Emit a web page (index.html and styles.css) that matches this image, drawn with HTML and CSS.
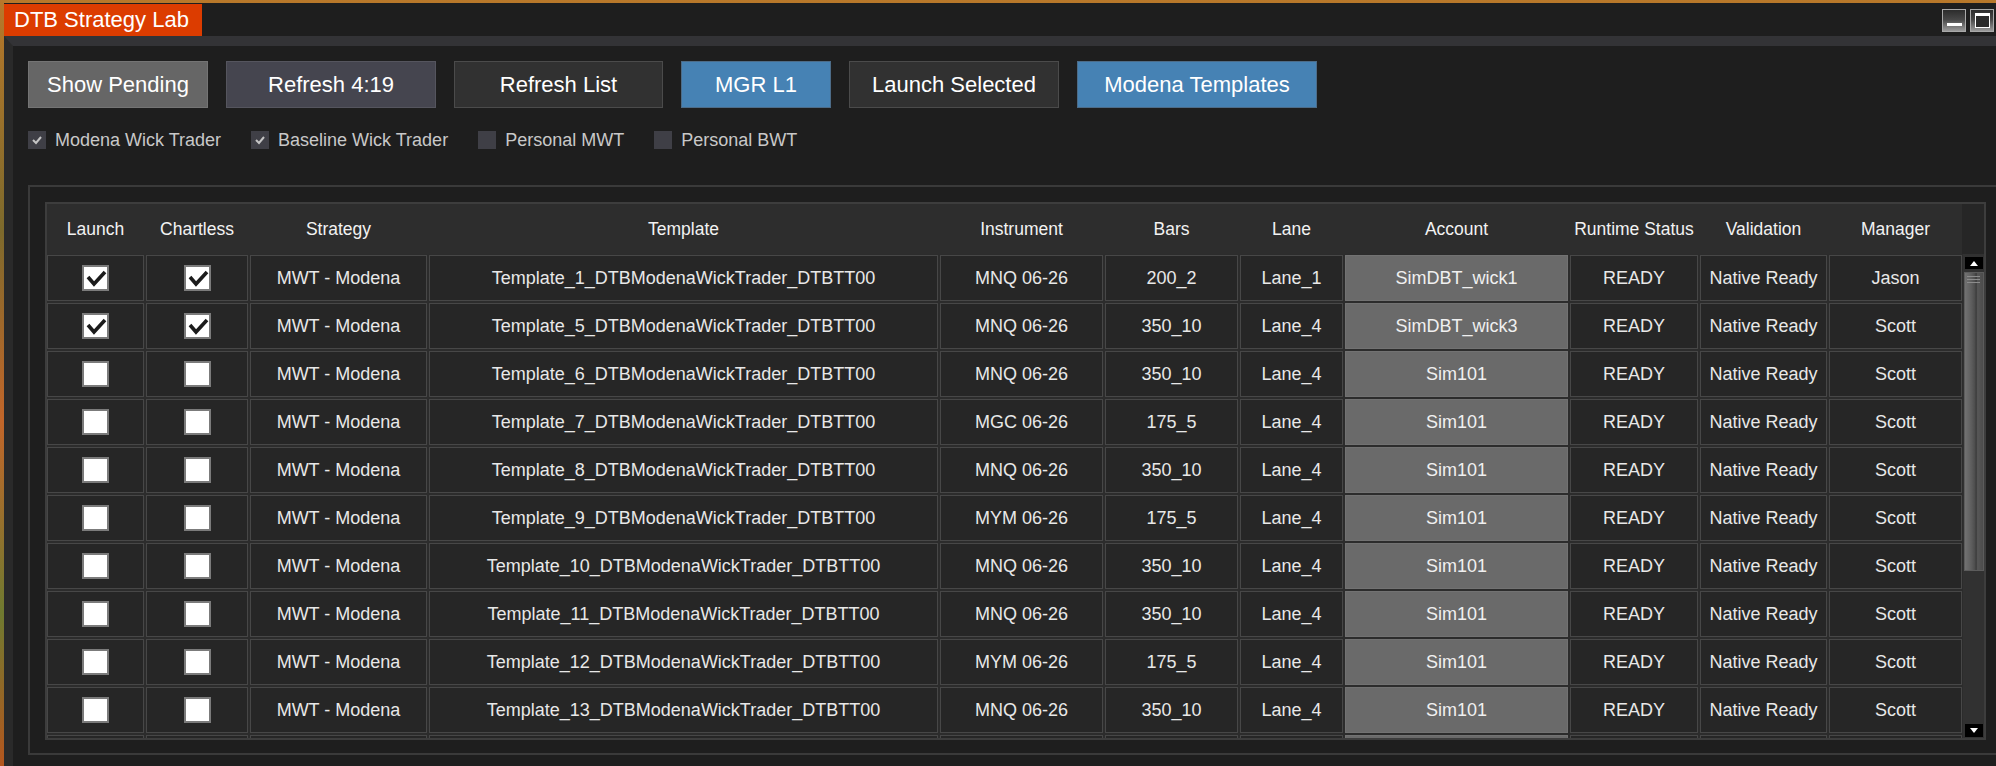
FILE: index.html
```html
<!DOCTYPE html>
<html>
<head>
    <title>DTB Strategy Lab</title>
    <link rel="stylesheet" href="styles.css">
</head>
<body>
    <div class="window">
        <div class="titlebar">
            <div class="title-tab">DTB Strategy Lab</div>
            <div class="win-controls">
                <span class="win-btn win-min"><span class="min-bar"></span></span>
                <span class="win-btn win-max"><span class="max-box"></span></span>
            </div>
        </div>

        <div class="frame">
            <div class="toolbar">
                <div class="btn btn-gray w-pending">Show Pending</div>
                <div class="btn btn-slate w-refresh">Refresh 4:19</div>
                <div class="btn btn-dark w-list">Refresh List</div>
                <div class="btn btn-blue w-mgr">MGR L1</div>
                <div class="btn btn-dark w-launch">Launch Selected</div>
                <div class="btn btn-blue w-templates">Modena Templates</div>
            </div>

            <div class="filters">
                <label class="filter">
                    <span class="fbox"><svg width="12" height="12" viewBox="0 0 12 12"><polyline points="2,6 5,9 10,3" fill="none" stroke="#c4c4c4" stroke-width="2"/></svg></span>
                    Modena Wick Trader
                </label>
                <label class="filter">
                    <span class="fbox"><svg width="12" height="12" viewBox="0 0 12 12"><polyline points="2,6 5,9 10,3" fill="none" stroke="#c4c4c4" stroke-width="2"/></svg></span>
                    Baseline Wick Trader
                </label>
                <label class="filter">
                    <span class="fbox"></span>
                    Personal MWT
                </label>
                <label class="filter">
                    <span class="fbox"></span>
                    Personal BWT
                </label>
            </div>

            <div class="panel">
                <div class="table">
                    <div class="thead">
                        <div class="cols">
                            <div class="th">Launch</div>
                            <div class="th">Chartless</div>
                            <div class="th">Strategy</div>
                            <div class="th">Template</div>
                            <div class="th">Instrument</div>
                            <div class="th">Bars</div>
                            <div class="th">Lane</div>
                            <div class="th">Account</div>
                            <div class="th">Runtime Status</div>
                            <div class="th">Validation</div>
                            <div class="th">Manager</div>
                        </div>
                        <div class="head-gap"></div>
                    </div>
                    <div class="tbody">
                        <div class="rows" id="rows"></div>
                        <div class="scrollbar">
                            <div class="sb-btn sb-up"><svg width="8" height="5" viewBox="0 0 8 5"><polygon points="0,5 8,5 4,0" fill="#fff"/></svg></div>
                            <div class="sb-thumb"><div class="sb-grip"></div></div>
                            <div class="sb-track"></div>
                            <div class="sb-btn sb-down"><svg width="8" height="5" viewBox="0 0 8 5"><polygon points="0,0 8,0 4,5" fill="#fff"/></svg></div>
                        </div>
                    </div>
                </div>
            </div>
        </div>
    </div>

    <script>
        // launch, chartless, template no, instrument, bars, lane, account, manager
        const data = [
            [1, 1, 1, 'MNQ 06-26', '200_2', 'Lane_1', 'SimDBT_wick1', 'Jason'],
            [1, 1, 5, 'MNQ 06-26', '350_10', 'Lane_4', 'SimDBT_wick3', 'Scott'],
            [0, 0, 6, 'MNQ 06-26', '350_10', 'Lane_4', 'Sim101', 'Scott'],
            [0, 0, 7, 'MGC 06-26', '175_5', 'Lane_4', 'Sim101', 'Scott'],
            [0, 0, 8, 'MNQ 06-26', '350_10', 'Lane_4', 'Sim101', 'Scott'],
            [0, 0, 9, 'MYM 06-26', '175_5', 'Lane_4', 'Sim101', 'Scott'],
            [0, 0, 10, 'MNQ 06-26', '350_10', 'Lane_4', 'Sim101', 'Scott'],
            [0, 0, 11, 'MNQ 06-26', '350_10', 'Lane_4', 'Sim101', 'Scott'],
            [0, 0, 12, 'MYM 06-26', '175_5', 'Lane_4', 'Sim101', 'Scott'],
            [0, 0, 13, 'MNQ 06-26', '350_10', 'Lane_4', 'Sim101', 'Scott']
        ];

        const tick = '<svg width="23" height="22" viewBox="0 0 23 22"><polyline points="4,10 10,17 21,5" fill="none" stroke="#1b1b1b" stroke-width="3.6"/></svg>';

        function box(checked) {
            return '<div class="cell"><span class="cb">' + (checked ? tick : '') + '</span></div>';
        }

        let html = '';
        data.forEach(r => {
            html += '<div class="row">'
                + box(r[0]) + box(r[1])
                + '<div class="cell">MWT - Modena</div>'
                + '<div class="cell">Template_' + r[2] + '_DTBModenaWickTrader_DTBTT00</div>'
                + '<div class="cell">' + r[3] + '</div>'
                + '<div class="cell">' + r[4] + '</div>'
                + '<div class="cell">' + r[5] + '</div>'
                + '<div class="cell account">' + r[6] + '</div>'
                + '<div class="cell">READY</div>'
                + '<div class="cell">Native Ready</div>'
                + '<div class="cell">' + r[7] + '</div>'
                + '</div>';
        });

        // next row, scrolled mostly out of view: only its top edge shows
        html += '<div class="row">';
        for (let i = 0; i < 11; i++) {
            html += '<div class="cell' + (i === 7 ? ' account' : '') + '"></div>';
        }
        html += '</div>';

        document.getElementById('rows').innerHTML = html;
    </script>
</body>
</html>
```

FILE: styles.css
```css
body {
    margin: 0;
    width: 1996px;
    height: 766px;
    overflow: hidden;
    background: linear-gradient(180deg, #b8782a 0%, #7d6a2c 30%, #c2662a 55%, #6f7a30 80%, #b4561e 100%);
    font-family: "Liberation Sans", Arial, sans-serif;
}
.window {
    margin: 3px 0 0 4px;
    height: 763px;
    background: #1e1e1e;
    display: flex;
    flex-direction: column;
    overflow: hidden;
}
.titlebar {
    height: 33px;
    flex: none;
    display: flex;
    justify-content: space-between;
    align-items: flex-start;
}
.title-tab {
    margin-top: 1px;
    width: 198px;
    height: 32px;
    box-sizing: border-box;
    padding-left: 10px;
    background: #dc3c00;
    color: #fff;
    font-size: 22px;
    line-height: 32px;
}
.win-controls {
    display: flex;
    gap: 4px;
    margin: 6px 2px 0 0;
}
.win-btn {
    width: 24px;
    height: 23px;
    box-sizing: border-box;
    border: 1px solid #a9a9a9;
    background: linear-gradient(180deg, #2c2c2c 0%, #474747 45%, #9a9a9a 100%);
    display: flex;
    justify-content: center;
}
.win-min {
    align-items: flex-end;
    padding-bottom: 5px;
}
.min-bar {
    width: 15px;
    height: 3px;
    background: #fff;
}
.win-max {
    align-items: center;
}
.max-box {
    width: 15px;
    height: 15px;
    box-sizing: border-box;
    border: 1px solid #fff;
    border-top-width: 3px;
    background: #2b2b2b;
}

.frame {
    flex: 1;
    border-top: 10px solid #333336;
    border-left: 9px solid #2a2a2a;
    padding: 15px 0 0 15px;
    display: flex;
    flex-direction: column;
    min-width: 0;
}
.toolbar {
    display: flex;
    gap: 18px;
    height: 47px;
    flex: none;
}
.btn {
    box-sizing: border-box;
    height: 47px;
    border: 1px solid;
    color: #fff;
    font-size: 22px;
    display: flex;
    align-items: center;
    justify-content: center;
}
.btn-gray {
    background: #666666;
    border-color: #747474;
}
.btn-slate {
    background: #45454f;
    border-color: #55555e;
}
.btn-dark {
    background: #313131;
    border-color: #4b4b4b;
}
.btn-blue {
    background: #4682b4;
    border-color: #4d6c88;
}
.w-pending { width: 180px; }
.w-refresh { width: 210px; }
.w-list { width: 209px; }
.w-mgr { width: 150px; }
.w-launch { width: 210px; }
.w-templates { width: 240px; }

.filters {
    display: flex;
    gap: 30px;
    margin-top: 23px;
    height: 18px;
    align-items: center;
    flex: none;
}
.filter {
    display: flex;
    align-items: center;
    gap: 9px;
    color: #c8c8c8;
    font-size: 18px;
}
.fbox {
    width: 18px;
    height: 18px;
    background: #3f3f46;
    display: flex;
    align-items: center;
    justify-content: center;
}

.panel {
    margin-top: 36px;
    width: 1985px;
    box-sizing: border-box;
    border: 2px solid #3a3a3a;
    padding: 15px 0 13px 15px;
    flex: none;
}
.table {
    width: 1941px;
    box-sizing: border-box;
    border: 2px solid #3d3d3d;
    background: #2c2c2c;
}
.thead {
    display: flex;
    height: 50px;
}
.cols,
.row {
    display: grid;
    grid-template-columns: 97px 102px 177px 509px 163px 133px 103px 223px 128px 127px 133px;
    column-gap: 2px;
    width: 1915px;
}
.cols {
    background: #2d2d2d;
    align-items: center;
}
.th {
    text-align: center;
    font-size: 17.5px;
    color: #f2f2f2;
}
.head-gap {
    width: 22px;
    background: #262626;
}
.tbody {
    display: flex;
    height: 484px;
    overflow: hidden;
}
.rows {
    width: 1915px;
    padding-top: 1px;
    display: flex;
    flex-direction: column;
    gap: 2px;
    overflow: hidden;
}
.row {
    height: 46px;
    flex: none;
}
.cell {
    box-sizing: border-box;
    border: 1px solid #474747;
    background: #262626;
    color: #e8e8e8;
    font-size: 18px;
    white-space: nowrap;
    display: flex;
    align-items: center;
    justify-content: center;
}
.cell.account {
    background: #6a6a6a;
    border-color: #727272;
    color: #f0f0f0;
}
.cb {
    width: 27px;
    height: 26px;
    box-sizing: border-box;
    border: 2px solid #7b7b7b;
    background: #fff;
    display: flex;
    align-items: center;
    justify-content: center;
}

.scrollbar {
    width: 21px;
    margin-left: 1px;
    background: #313131;
    display: flex;
    flex-direction: column;
    align-items: center;
    padding: 3px 0 1px;
    box-sizing: border-box;
}
.sb-btn {
    width: 18px;
    background: #000;
    display: flex;
    align-items: center;
    justify-content: center;
    flex: none;
}
.sb-up { height: 12px; }
.sb-down { height: 13px; }
.sb-thumb {
    width: 20px;
    height: 299px;
    margin-top: 3px;
    box-sizing: border-box;
    border: 1px solid #5c5c5c;
    background: linear-gradient(90deg, #727272 0%, #5e5e5e 35%, #4d4d4d 55%, #3a3a3a 62%, #575757 70%, #4c4c4c 100%);
    flex: none;
    display: flex;
    justify-content: center;
    padding-top: 3px;
}
.sb-grip {
    width: 13px;
    height: 7px;
    background: repeating-linear-gradient(180deg, #8c8c8c 0 1px, transparent 1px 3px);
}
.sb-track {
    flex: 1;
}
```
